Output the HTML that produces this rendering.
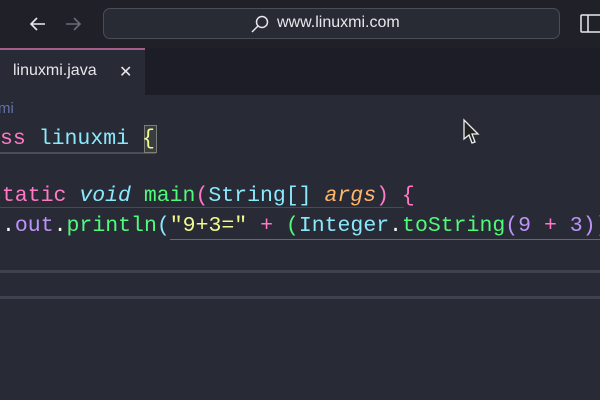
<!DOCTYPE html>
<html><head><meta charset="utf-8"><style>
*{margin:0;padding:0;box-sizing:border-box}
body{width:600px;height:400px;overflow:hidden;background:#282a36;position:relative;font-family:"Liberation Sans",sans-serif}
.top{position:absolute;left:0;top:0;width:600px;height:48px;background:#1f2028}
.url{position:absolute;left:103px;top:8px;width:457px;height:31px;border:1px solid #4a4c58;border-radius:7px;background:#282a34}
.url span{position:absolute;left:173px;top:5px;color:#e8e8ec;font-size:16px}
.tabs{position:absolute;left:0;top:48px;width:600px;height:47px;background:#1c1d26}
.tab{position:absolute;left:0;top:0;width:145px;height:47px;background:#282a36;border-top:2px solid #a85c8a}
.tab .t{position:absolute;left:13px;top:12px;color:#e6e6ea;font-size:16px}
.tab .x{position:absolute;left:119px;top:12px;color:#e6e6ea;font-size:16px}
.code{position:absolute;font-family:"Liberation Mono","DejaVu Sans Mono",monospace;font-size:21.5px;white-space:pre;line-height:30px}
.pk{color:#ff79c6}.cy{color:#8be9fd}.gr{color:#50fa7b}.or{color:#ffb86c}.pu{color:#bd93f9}.ye{color:#f1fa8c}.wh{color:#f8f8f2}
</style></head><body>
<div class="top">
<svg style="position:absolute;left:28px;top:14px" width="20" height="20" viewBox="0 0 20 20"><path d="M17 10H3M9 4L3 10L9 16" stroke="#e8e8ec" stroke-width="1.6" fill="none"/></svg>
<svg style="position:absolute;left:63px;top:14px" width="20" height="20" viewBox="0 0 20 20"><path d="M3 10H17M11 4L17 10L11 16" stroke="#6a6b75" stroke-width="1.6" fill="none"/></svg>
<div class="url"><svg style="position:absolute;left:146px;top:5px" width="20" height="20" viewBox="0 0 20 20"><circle cx="12" cy="8" r="5.5" stroke="#e8e8ec" stroke-width="1.5" fill="none"/><path d="M8 12L2 18" stroke="#e8e8ec" stroke-width="1.5"/></svg><span>www.linuxmi.com</span></div>
<svg style="position:absolute;left:580px;top:14px" width="20" height="20" viewBox="0 0 20 20"><rect x="1" y="1" width="20" height="17" stroke="#e8e8ec" stroke-width="1.5" fill="none" rx="1"/><path d="M8 1V18" stroke="#e8e8ec" stroke-width="1.5"/></svg>
</div>
<div class="tabs"><div class="tab"><span class="t">linuxmi.java</span><span class="x">✕</span></div></div>
<div style="position:absolute;left:-2px;top:100px;color:#6272a4;font-size:15px">mi</div>
<div style="position:absolute;left:0;top:152px;width:156px;height:2px;background:#4a4d5c"></div>
<div style="position:absolute;left:144px;top:125px;width:13px;height:28px;border:1px solid #7a7f7a;background:#3a3d40"></div>
<div class="code" style="left:0;top:124px"><span class="pk">ss</span> <span class="cy">linuxmi</span> <span class="ye">{</span></div>
<div style="position:absolute;left:0;top:207px;width:404px;height:1px;background:#6a3a55"></div>
<div style="position:absolute;left:170px;top:239px;width:430px;height:1px;background:#4a7a66"></div>
<div class="code" style="left:-11px;top:181px"><span class="pk">static</span> <span class="cy" style="font-style:italic">void</span> <span class="gr">main</span><span class="pk">(</span><span class="cy">String[]</span> <span class="or" style="font-style:italic">args</span><span class="pk">)</span> <span class="pk">{</span></div>
<div class="code" style="left:2px;top:211px"><span class="wh">.</span><span class="pu">out</span><span class="wh">.</span><span class="gr">println</span><span class="cy">(</span><span class="ye">"9+3="</span> <span class="pk">+</span> <span class="gr">(</span><span class="cy">Integer</span><span class="wh">.</span><span class="gr">toString</span><span class="pu">(9</span> <span class="pk">+</span> <span class="pu">3)</span><span class="gr">)</span></div>
<div style="position:absolute;left:0;top:270px;width:600px;height:3px;background:#3f4150"></div>
<div style="position:absolute;left:0;top:296px;width:600px;height:3px;background:#3f4150"></div>
<svg style="position:absolute;left:462px;top:118px" width="20" height="28" viewBox="0 0 20 28"><path d="M2 2V21L7 17L10 25L13 24L10 16H16Z" fill="#222" stroke="#eee" stroke-width="1.3"/></svg>
</body></html>
